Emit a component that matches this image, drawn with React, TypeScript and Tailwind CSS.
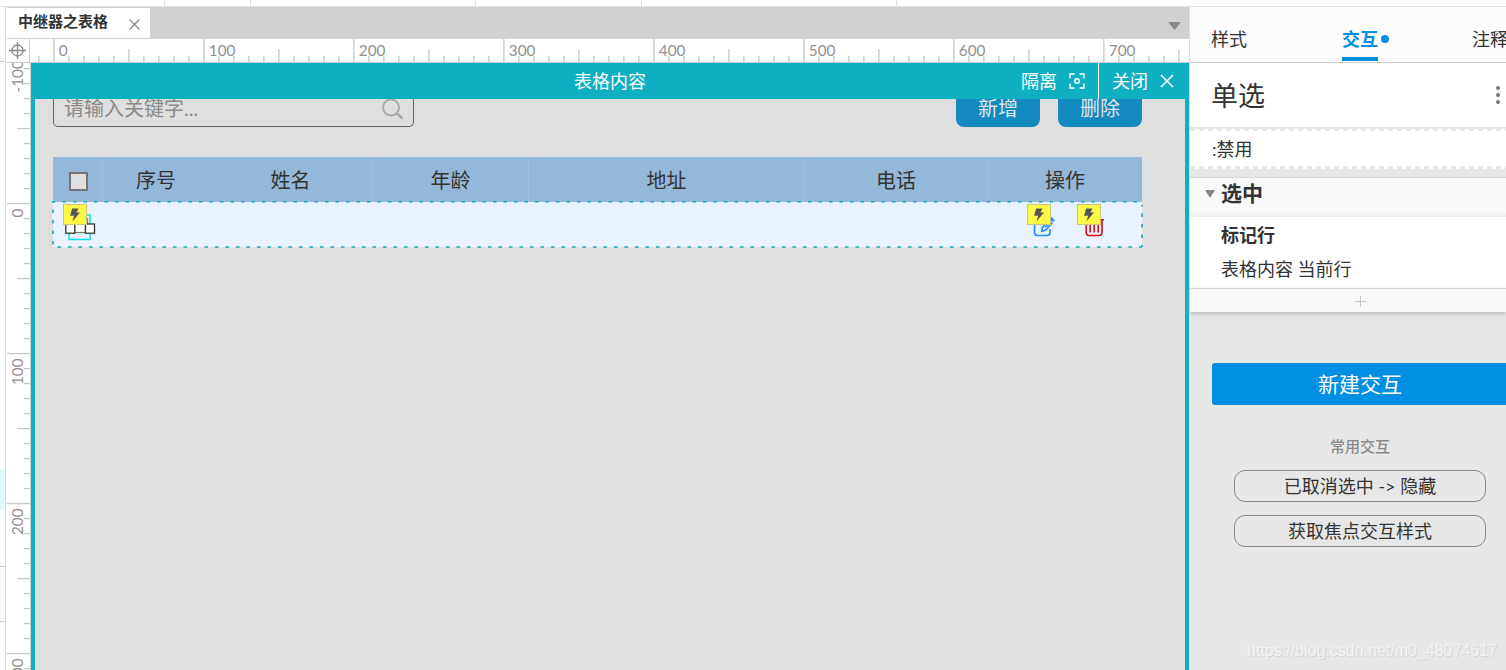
import React from "react";

const range = (n: number) => Array.from({ length: n }, (_, i) => i);

function HRuler() {
  return (
    <svg width="1159" height="24" className="block shrink-0">
      {range(79).map((i) => {
        const k = i - 1;
        const x = 23 + k * 15;
        const h = k % 10 === 0 ? 24 : k % 5 === 0 ? 14 : 7;
        return <rect key={i} x={x + 0.2} y={24 - h} width="1.35" height={h} fill="#c9c9c9" />;
      })}
      {range(8).map((i) => (
        <text key={i} x={28.8 + i * 150} y="17" fontSize="15.3" fill="#909090">
          {i * 100}
        </text>
      ))}
    </svg>
  );
}

function VRuler() {
  return (
    <svg width="23" height="607" className="block shrink-0">
      {range(42).map((i) => {
        const k = i - 9;
        const y = 140 + k * 15;
        const w = k % 10 === 0 ? 23 : k % 5 === 0 ? 13 : 6;
        return <rect key={i} x={23 - w} y={y - 0.1} width={w} height="1.35" fill="#c9c9c9" />;
      })}
      {[
        ["-100", 29.5],
        ["0", 154.5],
        ["100", 322],
        ["200", 472],
        ["300", 622],
      ].map(([t, y]) => (
        <text key={t} transform={`translate(16.3 ${y}) rotate(-90)`} fontSize="15.3" fill="#909090">
          {t}
        </text>
      ))}
    </svg>
  );
}

function Bolt({ className }: { className: string }) {
  return (
    <div className={"absolute flex h-[21px] w-6 items-center justify-center border border-[#c8c878] bg-[#fff847] " + className}>
      <svg width="12" height="14" viewBox="0 0 12 14" fill="#555">
        <path d="M3.2 0.5H9.5L7.4 4.4H11L3.4 13.5L5.2 7.8H1Z" />
      </svg>
    </div>
  );
}

function TopStrip() {
  return (
    <div className="flex h-[7px] shrink-0 border-b border-[#dedede] bg-white">
      <div className="w-[165px] border-r border-[#e0e0e0]" />
      <div className="w-[86px] border-r border-[#e0e0e0]" />
      <div className="w-[225px] border-r border-[#e0e0e0]" />
      <div className="w-[166px] border-r border-[#e0e0e0]" />
      <div className="w-[255px] border-r border-[#e0e0e0]" />
    </div>
  );
}

function TabBar() {
  return (
    <div className="flex h-8 shrink-0 justify-between bg-[#d1d1d1] pt-px">
      <div className="flex h-[30px] w-[143px] items-center bg-white pl-[11px]">
        <span className="mb-[3px] w-[105px] text-[15px] leading-none font-bold text-[#333]">中继器之表格</span>
        <svg width="11" height="11" viewBox="0 0 11 11" className="mt-[2px] ml-[6px] shrink-0" stroke="#888" strokeWidth="1.3">
          <path d="M0.500 0.500L10.500 10.500M10.500 0.500L0.500 10.500" />
        </svg>
      </div>
      <svg width="13" height="8" viewBox="0 0 13 8" className="mt-[14px] mr-2" fill="#8a8a8a">
        <path d="M0 0H13L6.5 8Z" />
      </svg>
    </div>
  );
}

function RepeaterHeader() {
  return (
    <div className="relative flex h-9 shrink-0 items-center justify-center bg-[#0fafc3] text-[18px] text-white">
      <span>表格内容</span>
      <div className="absolute inset-y-0 right-0 flex items-center">
        <span>隔离</span>
        <svg width="16" height="16" viewBox="0 0 16 16" className="mr-[13px] ml-[12px]" fill="none" stroke="#fff" strokeWidth="1.4">
          <path d="M5.500 1H1V5.500M10.500 1H15V5.500M1 10.500V15H5.500M15 10.500V15H10.500" />
          <circle cx="8" cy="8" r="2.2" />
        </svg>
        <div className="h-9 w-px bg-white" />
        <span className="ml-[13px]">关闭</span>
        <svg width="14" height="14" viewBox="0 0 14 14" className="mr-[15px] mb-px ml-[12px]" stroke="#fff" strokeWidth="1.5">
          <path d="M1 1L13 13M13 1L1 13" />
        </svg>
      </div>
    </div>
  );
}

function Table() {
  return (
    <div className="mt-[30px] ml-[17px] w-[1090px]">
      <div className="ml-px flex h-[45px] bg-[#94b8da] text-[20px] text-[#333]">
        <div className="flex w-[50px] items-center border-r border-[#a5bfd8] pt-[3px] pl-4">
          <div className="size-[19px] border-2 border-[#747474] bg-[#dfdfdf]" />
        </div>
        <div className="flex w-[106px] items-center justify-center">序号</div>
        <div className="flex w-[164px] items-center justify-center border-r border-[#a5bfd8]">姓名</div>
        <div className="flex w-[156px] items-center justify-center border-r border-[#a5bfd8]">年龄</div>
        <div className="flex w-[276px] items-center justify-center border-r border-[#a5bfd8]">地址</div>
        <div className="flex w-[183px] items-center justify-center border-r border-[#a5bfd8]">电话</div>
        <div className="flex w-[154px] items-center justify-center">操作</div>
      </div>
      <div className="ml-px h-[45px] bg-[#e8f3ff]">
        <div className="relative -ml-px h-[45px]">
          <svg width="1092" height="48" className="absolute -top-[1px] left-0" fill="none" stroke="#17aabd" strokeWidth="1.6" strokeDasharray="3.5 7">
            <path d="M0 0.800H1090" />
            <path d="M0 46H1090" strokeDashoffset="5" />
            <path d="M1 0V46M1090 4V46" strokeDashoffset="2" />
          </svg>
          <svg width="34" height="28" className="absolute top-3 left-[13px]" fill="none">
            <rect x="4" y="1" width="21" height="24.500" stroke="#0fe0e0" strokeWidth="1.5" />
            <path d="M22.500 4V12" stroke="#888" strokeWidth="1.300" />
            <g fill="#fff" stroke="#333" strokeWidth="1.3">
              <rect x="9.500" y="10" width="11" height="8.500" stroke="#777" />
              <rect x="0.800" y="10" width="9" height="9.200" />
              <rect x="20.500" y="10" width="9" height="9.200" />
            </g>
          </svg>
          <svg width="24" height="24" className="absolute top-[13px] left-[980px]" fill="none" stroke="#1f8fff" strokeWidth="1.7" strokeLinejoin="round">
            <path d="M9 3H4Q2.500 3 2.500 5V17.500Q2.500 20.500 5.500 20.500H15Q18 20.500 18 17.500V14" />
            <path d="M9.800 16.500L10.500 12.300L16.800 5.500L19.800 8.300L13.500 15.300Z" />
            <path d="M18 4.200L19.500 2.300L22.400 5L21 6.800Z" fill="#1f8fff" strokeWidth="0.800" />
            <path d="M13 12.500L17 8.300" strokeWidth="1.4" />
          </svg>
          <svg width="22" height="24" className="absolute top-[13px] left-[1032px]" fill="none" stroke="#d90f17" strokeWidth="1.6">
            <path d="M0 4.700H20M2.200 5V17Q2.200 20.500 5 20.500H15Q18 20.500 18 17V5" />
            <path d="M6.200 8V17.500M10.200 8V17.500M14.200 8V17.500" strokeWidth="1.600" />
          </svg>
          <Bolt className="top-[2px] left-[11px]" />
          <Bolt className="top-[2px] left-[975px]" />
          <Bolt className="top-[2px] left-[1025px]" />
        </div>
      </div>
    </div>
  );
}

function Canvas() {
  return (
    <div className="flex grow flex-col overflow-hidden">
      <RepeaterHeader />
      <div className="flex grow flex-col border-x-4 border-[#0fafc3] bg-[#dfdfdf]">
        <div className="flex h-7 shrink-0 pl-[18px]">
          <div className="flex h-7 w-[361px] justify-between overflow-hidden rounded-b-[5px] border-x border-b border-[#606060] pl-[10px] text-[20px] leading-[18px] text-[#8a8a8a]">
            <span>请输入关键字...</span>
            <svg width="24" height="24" className="-mt-[2px] mr-[8px]" fill="none" stroke="#aaa" strokeWidth="2">
              <circle cx="10" cy="10.500" r="8" />
              <path d="M16 16.500L21.500 21.500" strokeWidth="2.5" />
            </svg>
          </div>
          <div className="ml-[542px] h-7 w-[84px] overflow-hidden rounded-b-[8px] bg-[#1489bf] text-center text-[20px] leading-[19px] text-[#dfe5e9]">新增</div>
          <div className="ml-[18px] h-7 w-[84px] overflow-hidden rounded-b-[8px] bg-[#1489bf] text-center text-[20px] leading-[19px] text-[#dfe5e9]">删除</div>
        </div>
        <Table />
      </div>
    </div>
  );
}

function Inspector() {
  return (
    <div className="flex w-[317px] shrink-0 flex-col border-l border-[#dedede] bg-[#e7e7e7] text-[18px] text-[#333]">
      <div className="flex h-[56px] shrink-0 overflow-hidden border-b border-[#ccc] bg-[#fcfcfc] pl-[21px] leading-[64px] whitespace-nowrap">
        <span className="w-[131px] shrink-0">样式</span>
        <div className="flex w-[130px] shrink-0">
          <span className="h-[54px] border-b-4 border-[#008fe0] font-bold text-[#008fe0]">交互</span>
          <div className="mt-[28px] ml-[3px] size-2 rounded-full bg-[#008fe0]" />
        </div>
        <span className="shrink-0">注释</span>
      </div>
      <div className="flex h-[64px] shrink-0 items-center justify-between bg-white pr-[6px] pl-[21px] text-[27px]">
        <span className="mt-[2px]">单选</span>
        <div className="flex flex-col gap-[3px]">
          <div className="size-1 rounded-full bg-[#777]" />
          <div className="size-1 rounded-full bg-[#777]" />
          <div className="size-1 rounded-full bg-[#777]" />
        </div>
      </div>
      <div className="h-[2px] shrink-0 bg-[#e7e7e7]" />
      <div className="h-[2px] shrink-0 bg-[repeating-linear-gradient(90deg,#e7e7e7_0_5px,#fff_5px_9px)]" />
      <div className="h-[35px] shrink-0 bg-white pl-[22px] leading-[36px]">:禁用</div>
      <div className="h-[3px] shrink-0 bg-[repeating-linear-gradient(90deg,#e7e7e7_0_5px,#fff_5px_9px)]" />
      <div className="h-[9px] shrink-0 border-b border-[#d8d8d8]" />
      <div className="flex h-[39px] shrink-0 items-center bg-linear-to-b from-[#f9f9f9] from-85% to-[#eeeeee] pl-[15px] text-[21px] font-bold">
        <svg width="10" height="8" className="mr-[6px] mb-[8px]" fill="#888">
          <path d="M0 0H10L5 8Z" />
        </svg>
        <span className="mb-[9px]">选中</span>
      </div>
      <div className="flex h-[71px] shrink-0 flex-col bg-white pt-px pl-[31px] leading-[34px]">
        <span className="font-bold">标记行</span>
        <span>表格内容 当前行</span>
      </div>
      <div className="flex h-6 shrink-0 items-center justify-center border-t border-[#d6d6d6] bg-[#f9f9f9] shadow-[0_2px_4px_#bbb]">
        <svg width="11" height="11" className="mt-[2px] ml-6" stroke="#c9c9c9" shapeRendering="crispEdges">
          <path d="M5.500 0V11M0 5.500H11" />
        </svg>
      </div>
      <div className="mt-[51px] ml-[22px] h-[42px] w-[294px] shrink-0 rounded-l-[3px] bg-[#008fe3] pl-[2px] text-center text-[21px] leading-[42px] text-white">新建交互</div>
      <div className="mt-[31px] ml-[24px] h-[20px] shrink-0 text-center text-[15px] leading-[20px] font-medium text-[#8a8a8a]">常用交互</div>
      <div className="mt-[14px] ml-11 h-8 w-[252px] shrink-0 rounded-[11px] border border-[#888] text-center leading-[30px]">已取消选中 -&gt; 隐藏</div>
      <div className="mt-[13px] ml-11 h-8 w-[252px] shrink-0 rounded-[11px] border border-[#888] text-center leading-[30px]">获取焦点交互样式</div>
      <div className="mt-auto pr-[9px] pb-[7px] text-right font-['Liberation_Sans',Arial,sans-serif] text-[16px] text-[#f4f4f4] [text-shadow:1px_1px_1px_#d0d0d0]">
        https://blog.csdn.net/m0_48074617
      </div>
    </div>
  );
}

export default function App() {
  return (
    <div className="flex h-[670px] w-[1506px] flex-col overflow-hidden bg-white font-[Lato,'Noto_Sans_CJK_SC',sans-serif]">
      <TopStrip />
      <div className="flex min-h-0 grow">
        <div className="flex w-[6px] shrink-0 flex-col border-r border-[#dadada]">
          <div className="h-[55px] border-b border-[#ccc] bg-[#fcfcfc]" />
          <div className="h-[407px]" />
          <div className="h-[41px] bg-[#e0fafa]" />
          <div className="h-[56px]" />
          <div className="h-[56px] border-y border-[#ccc] bg-[#fafafa]" />
        </div>
        <div className="flex w-[1183px] shrink-0 flex-col pl-px">
          <TabBar />
          <div className="flex h-[24px] shrink-0 border-b border-[#ccc]">
            <div className="flex w-[24px] items-center justify-center border-r border-[#d0d0d0] pr-px">
              <svg width="17" height="17" className="shrink-0" fill="none" stroke="#888" strokeWidth="1.3">
                <circle cx="8.500" cy="8.500" r="5.500" />
                <path d="M8.500 0V17M0 8.500H17" />
              </svg>
            </div>
            <HRuler />
          </div>
          <div className="flex min-h-0 grow">
            <div className="w-[24px] shrink-0 border-r border-[#d0d0d0]">
              <VRuler />
            </div>
            <div className="flex grow">
              <Canvas />
            </div>
          </div>
        </div>
        <Inspector />
      </div>
    </div>
  );
}
